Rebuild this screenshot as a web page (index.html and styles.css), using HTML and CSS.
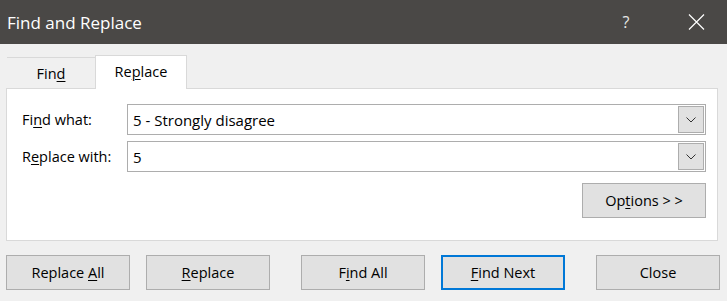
FILE: index.html
```html
<!DOCTYPE html>
<html>
<head>
    <title>Find and Replace</title>
    <link rel="stylesheet" href="styles.css">
</head>
<body>
    <div class="titlebar">
        <div class="title">Find and Replace</div>
        <div class="title-btn help">?</div>
        <div class="title-btn close">
            <svg width="17" height="16" viewBox="0 0 17 16">
                <path d="M1 0.5 L16 15.5 M16 0.5 L1 15.5" stroke="#fff" stroke-width="1.2" fill="none"/>
            </svg>
        </div>
    </div>

    <div class="tabs">
        <div class="tab"><span>Fin<u>d</u></span></div>
        <div class="tab selected"><span>Re<u>p</u>lace</span></div>
    </div>

    <div class="panel">
        <div class="field-row">
            <label class="field-label">Fi<u>n</u>d what:</label>
            <div class="combo">
                <span class="combo-text">5 - Strongly disagree</span>
                <span class="combo-btn">
                    <svg width="10" height="6" viewBox="0 0 10 6"><path d="M0.5 0.5 L5 5 L9.5 0.5" stroke="#333" stroke-width="1" fill="none"/></svg>
                </span>
            </div>
        </div>
        <div class="field-row">
            <label class="field-label">R<u>e</u>place with:</label>
            <div class="combo">
                <span class="combo-text">5</span>
                <span class="combo-btn">
                    <svg width="10" height="6" viewBox="0 0 10 6"><path d="M0.5 0.5 L5 5 L9.5 0.5" stroke="#333" stroke-width="1" fill="none"/></svg>
                </span>
            </div>
        </div>
        <div class="options-row">
            <div class="button"><span>Op<u>t</u>ions &gt; &gt;</span></div>
        </div>
    </div>

    <div class="actions">
        <div class="button"><span>Replace <u>A</u>ll</span></div>
        <div class="button"><span><u>R</u>eplace</span></div>
        <div class="button spaced"><span>F<u>i</u>nd All</span></div>
        <div class="button default"><span><u>F</u>ind Next</span></div>
        <div class="button spaced"><span>Close</span></div>
    </div>
</body>
</html>
```

FILE: styles.css
```css
* {
    box-sizing: border-box;
}
body {
    margin: 0;
    background-color: #f0f0f0;
    font-family: "Open Sans", "Noto Sans", sans-serif;
    font-size: 14.5px;
    color: #000;
}
u {
    text-decoration-thickness: 1px;
    text-underline-offset: 2px;
}
.titlebar {
    height: 44px;
    background-color: #4a4846;
    color: #fff;
    display: flex;
    align-items: center;
}
.title {
    flex: 1;
    padding-left: 7px;
    font-size: 17px;
}
.title-btn {
    display: flex;
    align-items: center;
    justify-content: center;
    font-size: 16px;
    color: #e8e8e8;
}
.help {
    width: 20px;
    margin-right: 52px;
}
.close {
    width: 17px;
    margin-right: 22px;
}
.tabs {
    display: flex;
    align-items: flex-end;
    margin-top: 11px;
    padding-left: 7px;
}
.tab {
    width: 88px;
    height: 31px;
    border-top: 1px solid #d9d9d9;
    display: flex;
    align-items: center;
    justify-content: center;
}
.tab.selected {
    width: 92px;
    height: 34px;
    background-color: #fff;
    border: 1px solid #d9d9d9;
    border-bottom: none;
    margin-bottom: -1px;
    padding-bottom: 2px;
    position: relative;
    z-index: 1;
}
.panel {
    margin: 0 9px 0 6px;
    height: 153px;
    background-color: #fff;
    border: 1px solid #d9d9d9;
    padding: 15px 11px 0 15px;
}
.field-row {
    display: flex;
    align-items: center;
    margin-bottom: 6px;
}
.field-label {
    width: 105px;
}
.combo {
    flex: 1;
    height: 31px;
    border: 1px solid #adadad;
    display: flex;
    align-items: center;
    padding: 1px;
}
.combo-text {
    flex: 1;
    padding-left: 4px;
    font-size: 15px;
}
.combo-btn {
    width: 26px;
    height: 27px;
    background-color: #e1e1e1;
    border: 1px solid #adadad;
    display: flex;
    align-items: center;
    justify-content: center;
}
.options-row {
    display: flex;
    justify-content: flex-end;
    margin-top: 11px;
}
.button {
    width: 124px;
    height: 35px;
    background-color: #e1e1e1;
    border: 1px solid #adadad;
    display: flex;
    align-items: center;
    justify-content: center;
}
.button.default {
    border: 2px solid #0078d7;
}
.actions {
    display: flex;
    gap: 16px;
    margin-top: 14px;
    padding-left: 6px;
}
.actions .spaced {
    margin-left: 15px;
}
```
